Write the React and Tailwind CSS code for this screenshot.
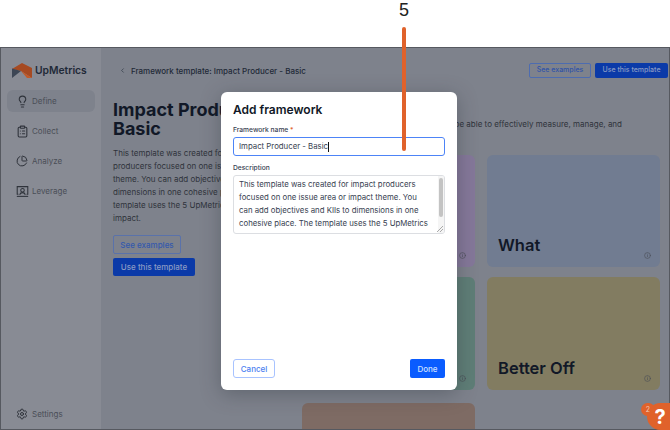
import React from "react";
import { Lightbulb, ClipboardList, ChartPie, Settings, ChevronLeft, Info } from "lucide-react";

const LeverageIcon = () => (
  <svg width="13" height="13" viewBox="0 0 16 16" fill="none" stroke="currentColor" strokeWidth="1.3">
    <path d="M3 11.5H1.5v-9.5h13v9.5H13" />
    <circle cx="8" cy="6.5" r="2.2" />
    <path d="M4.5 12c.6-1.8 2-2.6 3.5-2.6s2.9.8 3.5 2.6" />
    <path d="M1 14h14" />
  </svg>
);

const Logo = () => (
  <svg width="20" height="16" viewBox="0 0 20 16">
    <path d="M0 6 L10 0 L20 5 V15 L9 8 Z" fill="#a64a22" />
    <path d="M0 5.5 L9 8 L0 15 Z" fill="#3d4655" />
    <path d="M9 8 L20 15 H15 Z" fill="#c25a28" />
  </svg>
);

function NavItem({ icon, label, active }) {
  return (
    <div className={`flex items-center gap-[3px] h-[22px] pl-[8px] mx-[6px] text-[#4a4e57] ${active ? "bg-[#7e828c] rounded-md" : ""}`}>
      <span className="w-[14px] flex justify-center text-[#2f333b]">{icon}</span>
      <span className="text-[8px]">{label}</span>
    </div>
  );
}

function Card({ color, title, className = "" }) {
  return (
    <div className={`relative rounded-md h-[112px] ${color} ${className}`}>
      {title && <span className="absolute left-[11px] bottom-[12px] text-[16.5px] leading-[20px] font-semibold text-[#111827]">{title}</span>}
      <Info size={7} className="absolute right-[9px] bottom-[8px] text-[#4a4e57]" />
    </div>
  );
}

export default function App() {
  return (
    <div className="relative w-[670px] h-[430px] overflow-hidden bg-white font-['Inter',sans-serif]">
      <div className="h-[47px] flex justify-center pl-[138px] text-[18px] leading-[20px] text-[#222] font-['Liberation_Sans',sans-serif]">5</div>

      <div className="h-[383px] flex border border-[#565960] bg-[#7e828c] overflow-hidden">
        <aside className="w-[100px] shrink-0 bg-[#888b94] flex flex-col">
          <div className="flex items-center gap-[3px] pl-[11px] h-[42px] shrink-0 pt-[4px]">
            <Logo />
            <span className="text-[10.3px] font-semibold text-[#1f2937]">UpMetrics</span>
          </div>
          <div className="flex flex-col gap-[8px]">
            <NavItem active icon={<Lightbulb size={13} />} label="Define" />
            <NavItem icon={<ClipboardList size={13} />} label="Collect" />
            <NavItem icon={<ChartPie size={12} />} label="Analyze" />
            <NavItem icon={<LeverageIcon />} label="Leverage" />
          </div>
          <div className="mt-auto mb-[4px]">
            <NavItem icon={<Settings size={12} />} label="Settings" />
          </div>
        </aside>

        <main className="flex-1 min-w-0 flex flex-col">
          <header className="h-[45px] shrink-0 flex items-center pl-[18px] pr-[1px]">
            <ChevronLeft size={7} className="text-[#1f2937]" />
            <span className="ml-[5px] text-[8px] font-medium text-[#1f2937]">Framework template: Impact Producer - Basic</span>
            <div className="ml-auto flex gap-[4px]">
              <button className="h-[15px] w-[62px] border border-[#4d6cb0] rounded-[2px] text-[7px] font-medium text-[#2f53a8]">See examples</button>
              <button className="h-[15px] w-[73px] bg-[#0b3aa8] rounded-[2px] text-[7px] font-medium text-[#8a9bc4]">Use this template</button>
            </div>
          </header>

          <div className="flex pl-[12px] pt-[6px] gap-[20px]">
            <section className="w-[170px] shrink-0">
              <h1 className="text-[18px] leading-[19px] font-bold text-[#111827] whitespace-nowrap mt-[1px]">Impact Producer -<br />Basic</h1>
              <p className="mt-[9px] text-[8px] leading-[13px] text-[#2f333b] whitespace-nowrap">
                This template was created for impact<br />producers focused on one issue area or<br />theme. You can add objectives and KIIs to<br />dimensions in one cohesive place. The<br />template uses the 5 UpMetrics dimensions<br />impact.
              </p>
              <button className="block mt-[10px] w-[68px] h-[19px] border border-[#5a72aa] rounded-[2px] text-[8px] font-medium text-[#3459ad]">See examples</button>
              <button className="block mt-[4px] w-[82px] h-[18px] bg-[#0b3aa8] rounded-[2px] text-[8px] font-medium text-[#8a9bc4]">Use this template</button>
            </section>

            <section className="w-[358px] shrink-0 -ml-[1px]">
              <p className="h-[56px] pt-[19px] text-[8px] leading-[13px] text-[#2f333b] text-right pr-[38px] whitespace-nowrap">be able to effectively measure, manage, and</p>
              <div className="grid grid-cols-[173px_173px] gap-x-[12px] gap-y-[10px]">
                <Card color="bg-[#85789a]" />
                <Card color="bg-[#717c91]" title="What" />
                <Card color="bg-[#5f7e77]" className="h-[113px]" />
                <Card color="bg-[#827c61]" title="Better Off" className="h-[113px]" />
                <Card color="bg-[#7e6b64]" className="mt-[3px]" />
              </div>
            </section>
          </div>
        </main>
      </div>

      {/* Modal */}
      <div className="absolute left-[221px] top-[92px] w-[236px] h-[298px] bg-white rounded-md shadow-[0_4px_20px_rgba(40,45,55,0.35)] flex flex-col px-[12px] pt-[11px] pb-[12px]">
        <h2 className="text-[12px] leading-[14px] font-semibold text-[#111827]">Add framework</h2>
        <label className="mt-[9px] text-[6.7px] leading-[9px] font-medium text-[#374151]">Framework name <span className="text-[#e0602b]">*</span></label>
        <div className="mt-[2px] h-[19px] shrink-0 border-[1.5px] border-[#4d84f7] rounded-[3px] flex items-center pl-[5px] text-[7.8px] text-[#374151]">
          Impact Producer - Basic<span className="w-px h-[10px] bg-[#111]" />
        </div>
        <label className="mt-[8px] text-[6.7px] leading-[9px] font-medium text-[#374151]">Description</label>
        <div className="relative mt-[2px] h-[59px] shrink-0 border border-[#dcdee2] rounded-[3px] pl-[5px] pt-[2px] overflow-hidden">
          <p className="text-[7.8px] leading-[13px] text-[#374151] whitespace-nowrap">
            This template was created for impact producers<br />focused on one issue area or impact theme. You<br />can add objectives and KIIs to dimensions in one<br />cohesive place. The template uses the 5 UpMetrics
          </p>
          <div className="absolute right-0 top-0 bottom-0 w-[6px] bg-[#f5f5f5]">
            <div className="mx-auto mt-[2px] w-[4px] h-[39px] rounded-full bg-[#c3c3c3]" />
          </div>
          <svg className="absolute right-[1px] bottom-[1px]" width="6" height="6" viewBox="0 0 6 6" stroke="#888" strokeWidth="0.7"><path d="M0 6 6 0M3 6l3-3" /></svg>
        </div>
        <div className="mt-auto flex justify-between">
          <button className="w-[42px] h-[19px] border border-[#a8c3ff] rounded-[3px] text-[8px] font-medium text-[#4d7ff0]">Cancel</button>
          <button className="w-[35px] h-[19px] bg-[#0a5cff] rounded-[2px] text-[8px] font-medium text-[#cfe0ff]">Done</button>
        </div>
      </div>

      {/* Annotation line */}
      <div className="absolute left-[402px] top-[27px] w-[4px] h-[124px] bg-[#e0622b] rounded-full" />

      {/* Help bubble */}
      <div className="absolute left-[647px] top-[403px] w-[23px] h-[27px] rounded-l-full bg-[#e0622b] text-white font-bold text-[20px] leading-[27px] text-center pl-[3px] pt-[1px]">?</div>
      <div className="absolute left-[641px] top-[403px] w-[14px] h-[13px] rounded-full bg-[#e0622b] text-[#f3c9b5] text-[7px] leading-[13px] text-center">2</div>
    </div>
  );
}
